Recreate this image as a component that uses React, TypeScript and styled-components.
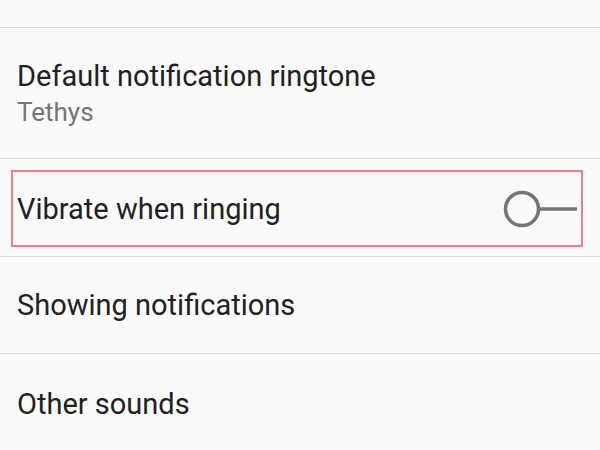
import styled, { createGlobalStyle } from "styled-components";

const GlobalStyle = createGlobalStyle`
  html, body {
    margin: 0;
    padding: 0;
    background: #fafafa;
  }
  body {
    font-family: Roboto, "Noto Sans", sans-serif;
    width: 600px;
    height: 450px;
    overflow: hidden;
  }
`;

const List = styled.div`
  display: flex;
  flex-direction: column;
  background: #fafafa;
`;

const TopGap = styled.div`
  height: 27px;
  border-bottom: 1px solid #dedede;
`;

const Row = styled.div<{ $height: number }>`
  height: ${(p) => p.$height - 1}px;
  border-bottom: 1px solid #dedede;
  display: flex;
  flex-direction: column;
  justify-content: center;
  padding: 0 17px;
`;

const HighlightRow = styled.div`
  height: 98px;
  border-bottom: 1px solid #dedede;
  padding: 11px 17px 9px 11px;
  box-sizing: border-box;
  display: flex;
`;

const Highlight = styled.div`
  flex: 1;
  border: 2px solid #f47c88;
  display: flex;
  align-items: center;
  justify-content: space-between;
  padding: 0 3px 0 4px;
`;

const Title = styled.div`
  font-size: 29px;
  color: #212121;
  line-height: 38px;
`;

const Summary = styled.div`
  font-size: 26px;
  color: #757575;
  line-height: 34px;
`;

const Switch = () => (
  <svg width="76" height="40" viewBox="0 0 76 40">
    <circle cx="20" cy="20" r="16.5" fill="none" stroke="#757575" strokeWidth="3.5" />
    <line x1="36" y1="20" x2="75" y2="20" stroke="#757575" strokeWidth="3.5" />
  </svg>
);

export default function App() {
  return (
    <>
      <GlobalStyle />
      <List>
        <TopGap />
        <Row $height={131}>
          <Title>Default notification ringtone</Title>
          <Summary>Tethys</Summary>
        </Row>
        <HighlightRow>
          <Highlight>
            <Title>Vibrate when ringing</Title>
            <Switch />
          </Highlight>
        </HighlightRow>
        <Row $height={97}>
          <Title>Showing notifications</Title>
        </Row>
        <Row $height={100}>
          <Title>Other sounds</Title>
        </Row>
      </List>
    </>
  );
}
